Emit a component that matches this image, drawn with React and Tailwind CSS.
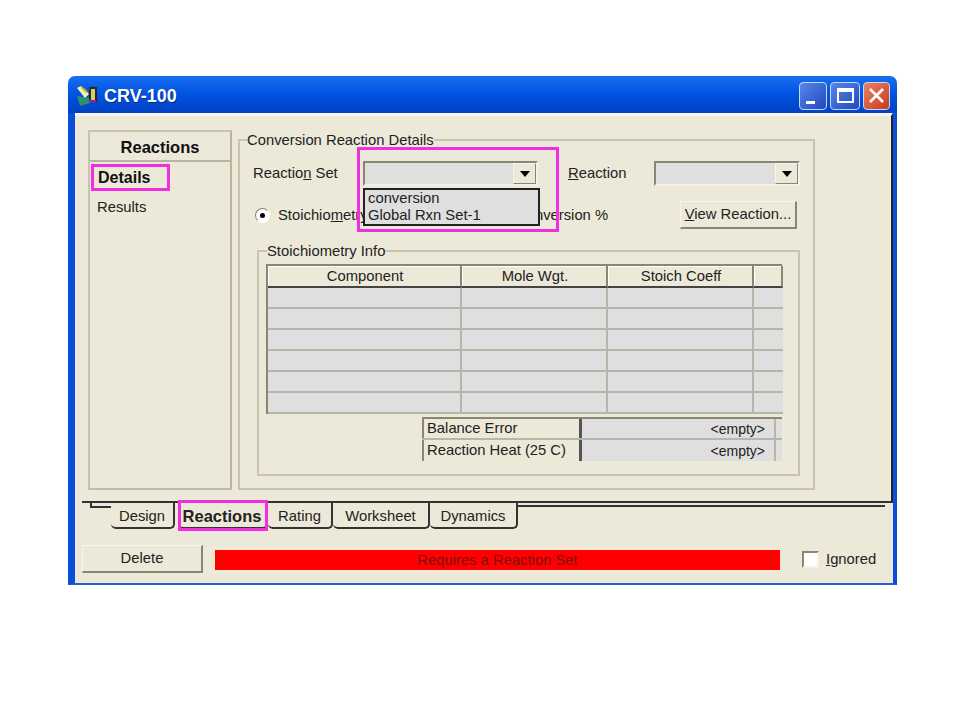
const FONT = "font-['Liberation_Sans',Arial,sans-serif]";

function Logo() {
  return (
    <svg width="24" height="22" viewBox="0 0 24 22" className="shrink-0">
      <path d="M1 11 L14 13 L14 18 L4 21 Z" fill="#2f8f6a" />
      <path d="M1 3 L5 1 L13 9 L9 13 Z" fill="#f4f0b0" />
      <path d="M4 2 L8 3 L12 7 L10 8 Z" fill="#c8b820" />
      <rect x="13" y="2" width="8" height="15" fill="#1c2a40" />
      <rect x="15" y="4" width="4" height="11" fill="#d8d050" />
      <rect x="13" y="15" width="7" height="2" fill="#a02080" />
    </svg>
  );
}

function WinButton({ children, className }) {
  return (
    <div className={`flex h-[28px] items-center justify-center rounded-[4px] border border-[#c8d8f8] ${className}`}>
      {children}
    </div>
  );
}

function TitleBar() {
  return (
    <div className="flex h-[37px] items-center rounded-t-[7px] bg-gradient-to-b from-[#1a6ef0] via-[#0052e0] to-[#0042c4] pl-[8px] pr-[7px] pt-[2px]">
      <Logo />
      <span className="ml-[4px] mt-[1px] text-[18px] font-bold text-white [text-shadow:1px_1px_0_#0a2a90]">CRV-100</span>
      <div className="ml-auto flex gap-[3px]">
        <WinButton className="w-[28px] items-end justify-start bg-gradient-to-br from-[#5a86e8] to-[#2048c0] pb-[5px] pl-[6px]">
          <div className="h-[3px] w-[9px] bg-white" />
        </WinButton>
        <WinButton className="w-[30px] bg-gradient-to-br from-[#5a86e8] to-[#2048c0]">
          <div className="h-[15px] w-[17px] border-2 border-t-[4px] border-white" />
        </WinButton>
        <WinButton className="w-[27px] bg-gradient-to-br from-[#e88060] to-[#c83818]">
          <svg width="17" height="17" viewBox="0 0 17 17">
            <path d="M2 2 L15 15 M15 2 L2 15" stroke="#fff" strokeWidth="2.6" />
          </svg>
        </WinButton>
      </div>
    </div>
  );
}

function Sidebar() {
  return (
    <div className="relative h-[360px] w-[144px] shrink-0 border-2 border-[#c8c4b0] border-r-[#b8b4a0] border-b-[#c0bca8]">
      <div className="flex h-[30px] items-center justify-center border-b-2 border-[#b8b4a0] pt-[2px] text-[16.5px] font-bold text-[#111]">
        Reactions
      </div>
      <div className="pl-[8px] pt-[6px] text-[16px] font-bold leading-[20px] text-[#111]">Details</div>
      <div className="pl-[7px] pt-[9px] text-[14.8px] leading-[20px] text-[#222]">Results</div>
      <div className="absolute left-[1px] top-[32px] h-[27px] w-[79px] border-[3px] border-[#f030e0]" />
    </div>
  );
}

function Combo({ className }) {
  return (
    <div className={`flex h-[25px] items-stretch border-2 border-[#8a8676] border-r-[#f4f2e8] border-b-[#f4f2e8] bg-[#dfdfdf] ${className}`}>
      <div className="flex-1" />
      <div className="flex w-[23px] items-center justify-center border border-[#f8f6ec] border-r-[#8a8676] border-b-[#8a8676] bg-[#ece9d8]">
        <div className="h-0 w-0 border-x-[5px] border-t-[6px] border-x-transparent border-t-black" />
      </div>
    </div>
  );
}

function Legend({ children, className }) {
  return <legend className={`ml-[7px] text-[14.8px] leading-[18px] text-[#222] ${className}`}>{children}</legend>;
}

const ROWS = [0, 1, 2, 3, 4, 5];

function GridHead({ children, className }) {
  return (
    <div className={`flex h-[22px] items-center justify-center border-b-2 border-r-2 border-b-[#444] border-r-[#8a8676] bg-[#ece9d8] pl-[2px] text-[14.8px] leading-none text-[#222] shadow-[inset_1px_1px_0_#fff] ${className}`}>
      {children}
    </div>
  );
}

function StoichGrid() {
  return (
    <div className="border-l-2 border-t-2 border-[#8a8676]">
      <div className="grid grid-cols-[194px_146px_146px_29px]">
        <GridHead>Component</GridHead>
        <GridHead>Mole Wgt.</GridHead>
        <GridHead>Stoich Coeff</GridHead>
        <GridHead className="border-r-0" />
        {ROWS.map((r) =>
          [0, 1, 2, 3].map((c) => (
            <div
              key={`${r}-${c}`}
              className={`h-[21px] border-b-2 bg-[#dfdfdf] ${c < 3 ? "border-r-2" : ""} border-[#b8b6a8]`}
            />
          ))
        )}
      </div>
    </div>
  );
}

function SummaryRow({ label }) {
  return (
    <div className="grid h-[21px] grid-cols-[160px_194px_6px] border-b-2 border-[#b8b6a8] last:border-b-0">
      <div className="flex items-center border-l-2 border-r-[3px] border-l-[#8a8676] border-r-[#555] bg-[#ece9d8] pl-[3px] text-[14.8px] leading-none text-[#222]">
        {label}
      </div>
      <div className="flex items-center justify-end border-r-2 border-[#b8b6a8] bg-[#dfdfdf] pr-[9px] text-[14px] leading-none text-[#222]">
        &lt;empty&gt;
      </div>
      <div className="bg-[#dfdfdf]" />
    </div>
  );
}

function Details() {
  return (
    <fieldset className="relative mt-[1px] h-[359px] w-[577px] border-2 border-[#c8c4b0]">
      <Legend>Conversion Reaction Details</Legend>
      <div className="flex items-center pl-[13px] pt-[12px]">
        <span className="w-[110px] text-[14.8px] text-[#222]">
          Reactio<span className="underline">n</span> Set
        </span>
        <Combo className="w-[175px]" />
        <span className="ml-[30px] w-[86px] text-[14.8px] text-[#222]">
          <span className="underline">R</span>eaction
        </span>
        <Combo className="w-[146px]" />
      </div>
      <div className="mt-[15px] flex h-[28px] items-center pl-[15px]">
        <div className="flex h-[15px] w-[15px] items-center justify-center rounded-full border border-[#8a8676] border-b-white border-r-white bg-white">
          <div className="h-[5px] w-[5px] rounded-full bg-black" />
        </div>
        <span className="ml-[8px] w-[238px] text-[14.8px] text-[#222]">
          Stoichio<span className="underline">m</span>etry
        </span>
        <span className="w-[92px] whitespace-nowrap text-[14.8px] text-[#222]">Conversion %</span>
        <button className="ml-[72px] h-[28px] w-[117px] border border-[#f8f6ec] border-r-2 border-b-2 border-r-[#8a8676] border-b-[#8a8676] bg-[#ece9d8] text-[14.8px] leading-none text-[#222]">
          <span className="underline">V</span>iew Reaction...
        </button>
      </div>
      <fieldset className="ml-[17px] mt-[13px] h-[234px] w-[543px] border-2 border-[#c8c4b0]">
        <Legend className="!ml-[8px]">Stoichiometry Info</Legend>
        <div className="ml-[7px] mt-[4px] w-[516px]">
          <StoichGrid />
          <div className="ml-[156px] mt-[3px] border-t-2 border-[#8a8676]">
            <SummaryRow label="Balance Error" />
            <SummaryRow label="Reaction Heat (25 C)" />
          </div>
        </div>
      </fieldset>

      {/* opened dropdown and its highlight */}
      <div className="absolute left-[123px] top-[39px] h-[38px] w-[177px] border-2 border-[#222] bg-[#dfdfdf] pl-[3px] text-[14.8px] leading-[17px] text-[#222]">
        <div>conversion</div>
        <div>Global Rxn Set-1</div>
      </div>
      <div className="absolute left-[117px] top-[-2px] h-[85px] w-[202px] border-[3px] border-[#f030e0]" />
    </fieldset>
  );
}

function Tab({ children, active, className }) {
  return (
    <div
      className={`flex h-[26px] items-center justify-center rounded-b-[5px] border-b-2 border-r-2 border-[#333] bg-[#ece9d8] pt-[3px] leading-none text-[#222] ${active ? "text-[16.5px] font-bold" : "text-[14.8px]"} ${className}`}
    >
      {children}
    </div>
  );
}

function Tabs() {
  return (
    <div className="flex">
      <div className="ml-[15px] h-[5px] w-[21px] border-b-2 border-l-2 border-[#333]" />
      <Tab className="w-[64px]">Design</Tab>
      <div className="relative ml-[3px]">
        <Tab active className="w-[90px]">Reactions</Tab>
        <div className="absolute -top-[3px] left-0 h-[31px] w-[90px] border-[3px] border-[#f030e0]" />
      </div>
      <Tab className="w-[65px]">Rating</Tab>
      <Tab className="w-[97px]">Worksheet</Tab>
      <Tab className="w-[88px]">Dynamics</Tab>
      <div className="mr-[8px] mt-[2px] h-[2px] flex-1 bg-[#333]" />
    </div>
  );
}

function BottomBar() {
  return (
    <div className="flex items-center pl-[7px] pt-[16px]">
      <button className="h-[28px] w-[121px] border border-[#f8f6ec] border-r-2 border-b-2 border-r-[#8a8676] border-b-[#8a8676] bg-[#ece9d8] text-[14.8px] leading-none text-[#222]">
        Delete
      </button>
      <div className="ml-[12px] mt-[2px] flex h-[20px] w-[565px] items-center justify-center bg-[#ff0000] text-[14.8px] leading-none text-[#7a1010]">
        Requires a Reaction Set
      </div>
      <div className="ml-[22px] h-[17px] w-[17px] border-2 border-[#8a8676] border-r-[#f4f2e8] border-b-[#f4f2e8] bg-white" />
      <span className="ml-[7px] text-[14.8px] leading-none text-[#222]">
        <span className="underline">I</span>gnored
      </span>
    </div>
  );
}

export default function App() {
  return (
    <div className={`h-[720px] w-[960px] bg-white pl-[68px] pt-[76px] ${FONT}`}>
      <div className="flex h-[509px] w-[829px] flex-col">
        <TitleBar />
        <div className="flex-1 border-b-[2px] border-l-[7px] border-r-[4px] border-b-[#2a5fd8] border-l-[#0a4fdc] border-r-[#0a4fdc] bg-[#ece9d8]">
          <div className="h-[388px] border-r-2 border-t-[3px] border-r-[#222] border-t-[#f8f6ec]">
            <div className="flex gap-[6px] pl-[13px] pt-[14px]">
              <Sidebar />
              <Details />
            </div>
          </div>
          <div className="ml-[7px] h-[2px] bg-[#333]" />
          <Tabs />
          <BottomBar />
        </div>
      </div>
    </div>
  );
}
